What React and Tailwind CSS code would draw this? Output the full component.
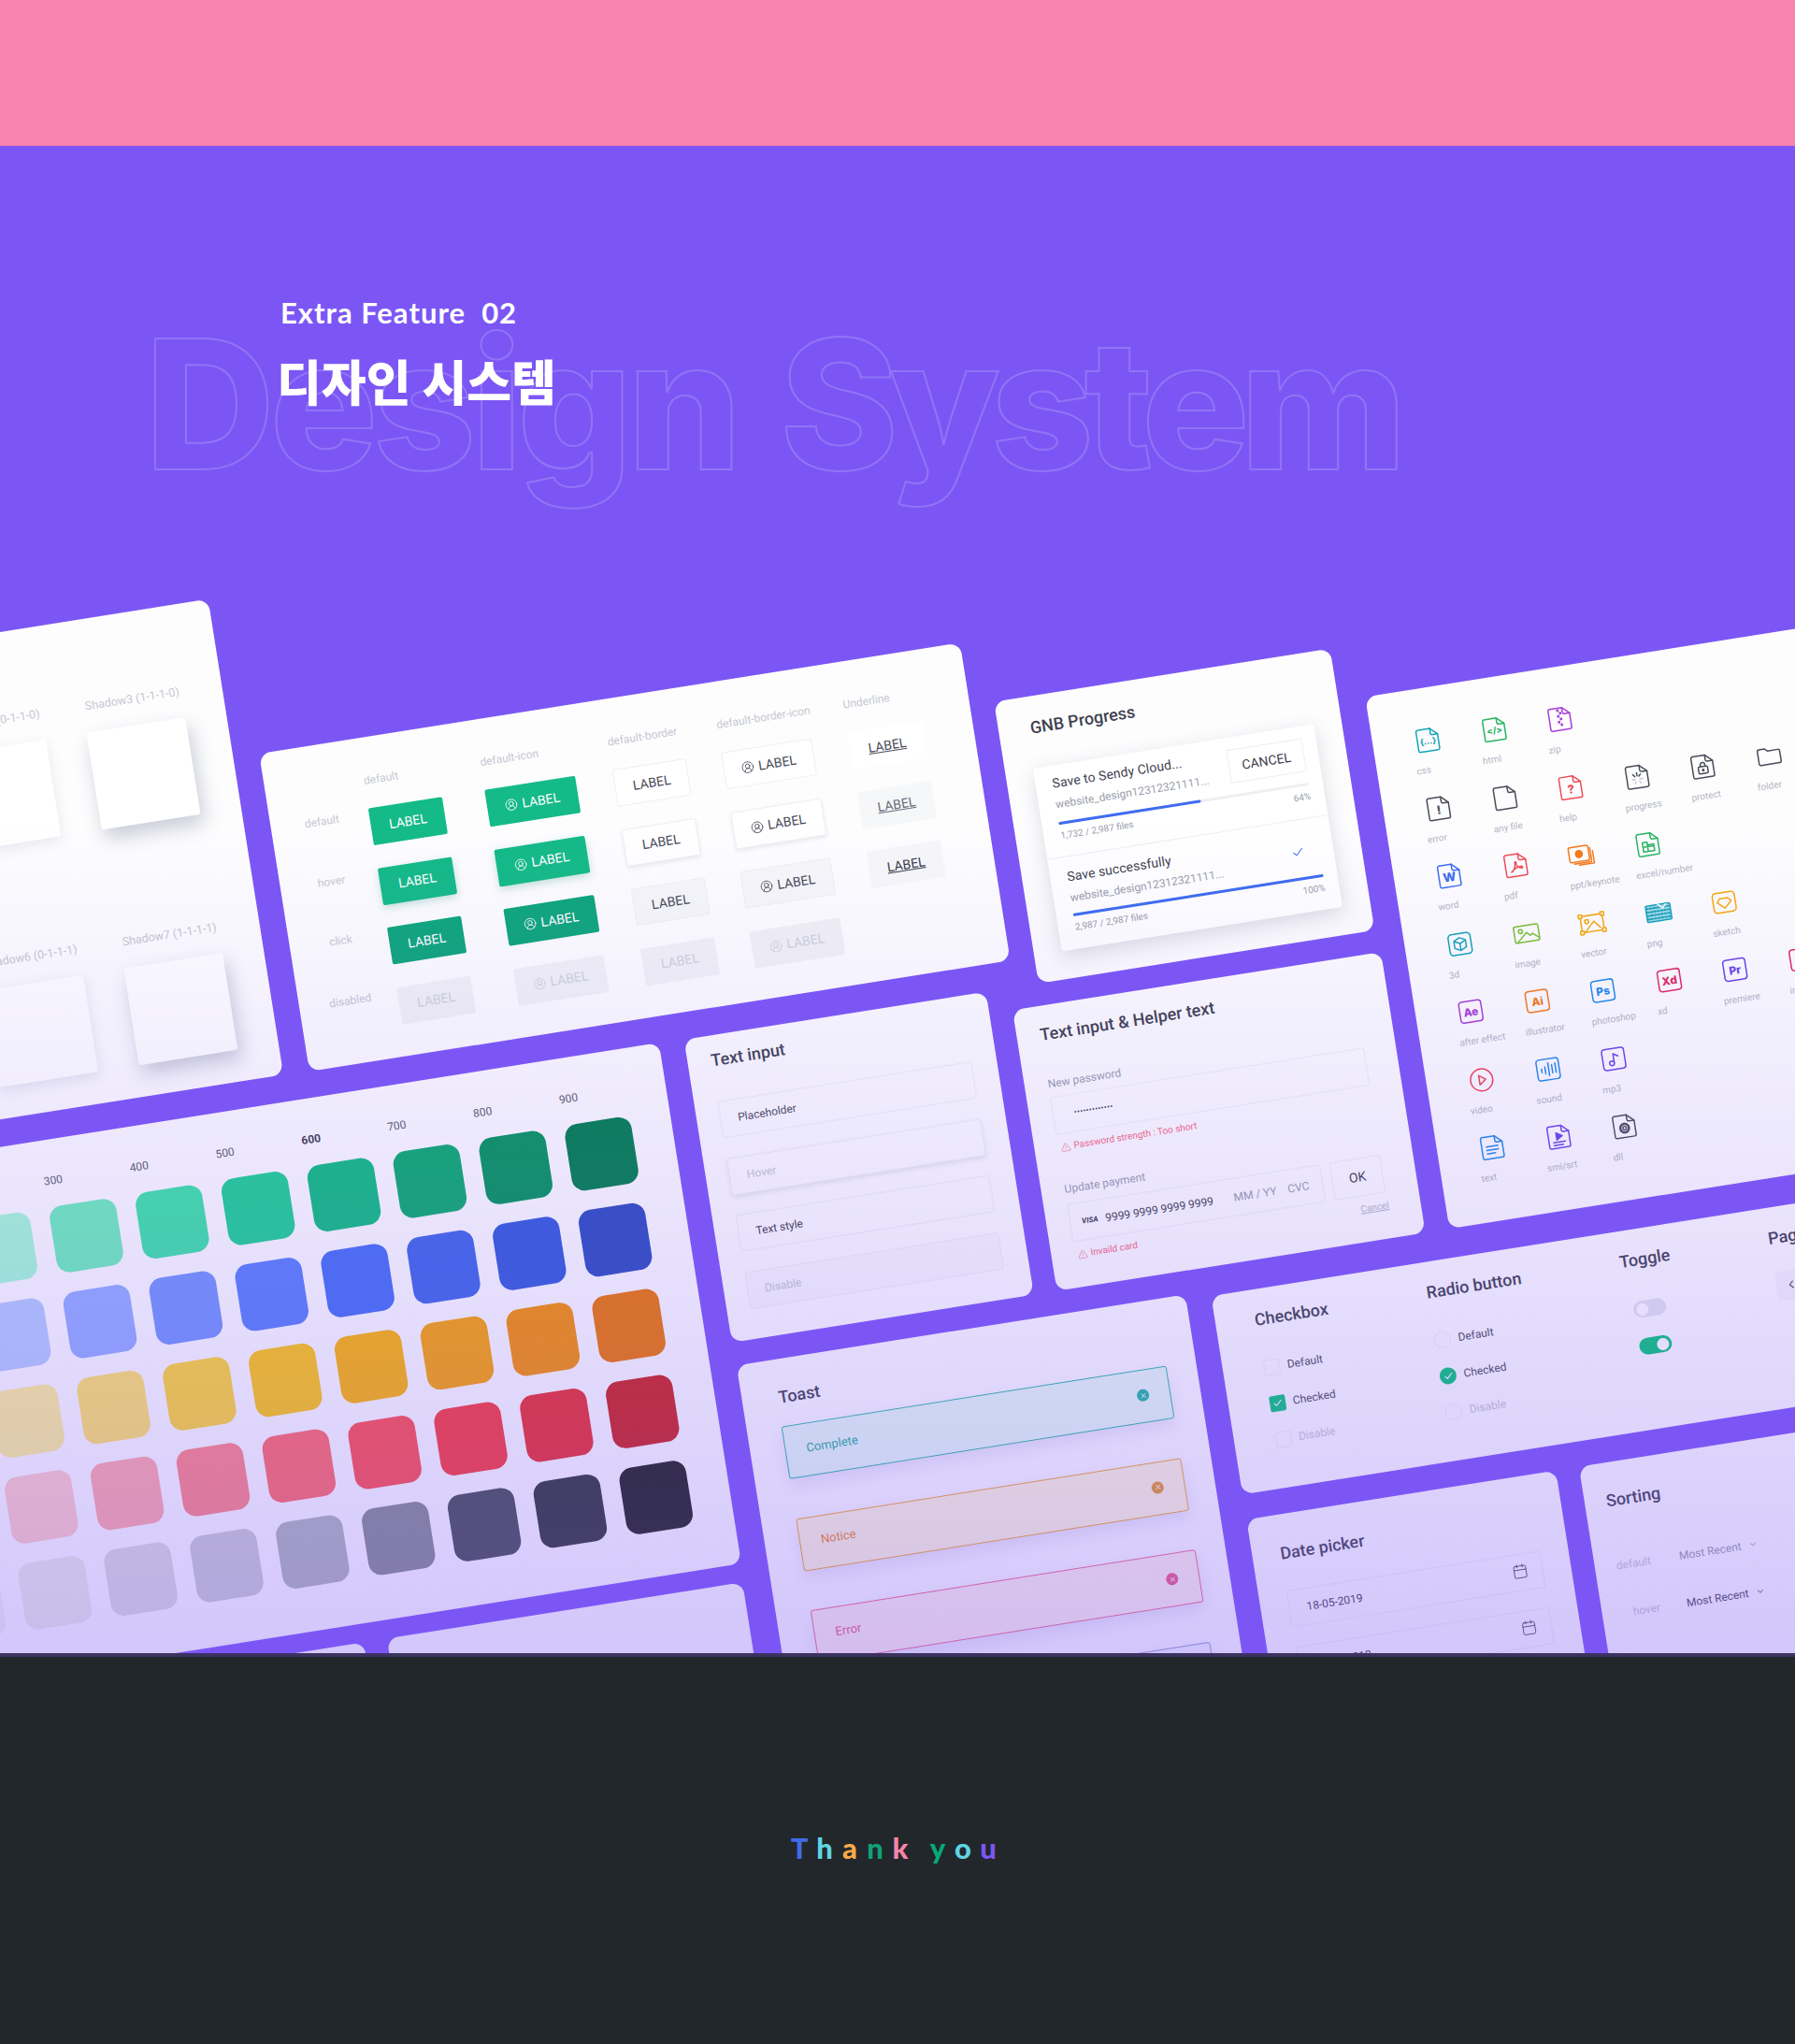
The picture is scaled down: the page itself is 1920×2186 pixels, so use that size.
import React from 'react';
import { CircleUserRound, Check, ChevronDown, ChevronLeft, Calendar, X, TriangleAlert } from 'lucide-react';

const FILE = 'M4.5 2.5H15l6 5.500V20a1.500 1.500 0 0 1-1.500 1.500h-15A1.500 1.500 0 0 1 3 20V4a1.500 1.500 0 0 1 1.500-1.500z';
const FOLD = 'M15 2.500V6.500A1.500 1.500 0 0 0 16.500 8H21';

const FileIcon = ({ color, children }) => (
  <svg width="30" height="30" viewBox="0 0 24 24" fill="none" stroke={color} strokeWidth="1.200" strokeLinejoin="round" strokeLinecap="round">
    <path d={FILE} />
    <path d={FOLD} />
    {children}
  </svg>
);

const BoxIcon = ({ color, label }) => (
  <svg width="30" height="30" viewBox="0 0 24 24" fill="none">
    <rect x="2.500" y="3" width="19" height="18" rx="2.500" stroke={color} strokeWidth="1.200" />
    <text x="12" y="15.800" textAnchor="middle" fontFamily="Inter, sans-serif" fontWeight="800" fontSize="9.500" fill={color}>{label}</text>
  </svg>
);

const Glyph = ({ color, children, size = 8, y = 16 }) => (
  <text x="12" y={y} textAnchor="middle" fontFamily="Inter, sans-serif" fontWeight="800" fontSize={size} fill={color} stroke="none">{children}</text>
);

const RawIcon = ({ color, children }) => (
  <svg width="30" height="30" viewBox="0 0 24 24" fill="none" stroke={color} strokeWidth="1.200" strokeLinejoin="round" strokeLinecap="round">
    {children}
  </svg>
);

const DARK = '#4a4d5a';
const iconRows = [
  [
    { name: 'css', icon: <FileIcon color="#14a3b8"><Glyph color="#14a3b8" size="7" y="15.500">{'{…}'}</Glyph></FileIcon> },
    { name: 'html', icon: <FileIcon color="#27b562"><Glyph color="#27b562" size="7.500" y="15.500">{'</>'}</Glyph></FileIcon> },
    { name: 'zip', icon: <FileIcon color="#a83fd8"><path d="M10 4.500h2M12 7h2M10 9.500h2M12 12h2M10 14.500h2M12 17h2" strokeWidth="2.200" strokeLinecap="butt" /></FileIcon> },
  ],
  [
    { name: 'error', icon: <FileIcon color={DARK}><Glyph color={DARK} size="10" y="17">!</Glyph></FileIcon> },
    { name: 'any file', icon: <FileIcon color={DARK} /> },
    { name: 'help', icon: <FileIcon color="#f04b55"><Glyph color="#f04b55" size="10" y="17">?</Glyph></FileIcon> },
    { name: 'progress', icon: <FileIcon color={DARK}><path d="M12 8.500v2.500M8.500 9.500l1.500 2M15 10l-1.500 1.500" stroke={DARK} /><path d="M7.500 14H10M14 14h2.500M9.500 17.500l1-1.500M14.500 17.500l-1-1.500" stroke="#c9ccd4" /></FileIcon> },
    { name: 'protect', icon: <FileIcon color={DARK}><rect x="8" y="12" width="8" height="6" rx="1" /><path d="M10 12v-1.500a2 2 0 0 1 4 0V12" /><circle cx="12" cy="15" r=".6" fill={DARK} /></FileIcon> },
    { name: 'folder', icon: <RawIcon color={DARK}><path d="M2.500 7A1.500 1.500 0 0 1 4 5.500h5l2 2h9A1.500 1.500 0 0 1 21.500 9v8.500A1.500 1.500 0 0 1 20 19H4a1.500 1.500 0 0 1-1.500-1.500z" /></RawIcon> },
  ],
  [
    { name: 'word', icon: <FileIcon color="#3d6cf0"><Glyph color="#3d6cf0" size="10.500" y="17">W</Glyph></FileIcon> },
    { name: 'pdf', icon: <FileIcon color="#f04b55"><path d="M7.500 17.500c2.500-1 4-4.500 4-7.500 0-1.500 1-1.500 1 0 0 3 2 5 4.500 5 1 0 .5-1.500-1-1.500-3 0-6.500 2-8.500 4z" /></FileIcon> },
    { name: 'ppt/keynote', icon: <RawIcon color="#f57a1a"><rect x="1.500" y="4.500" width="17" height="13" rx="1.500" /><path d="M20 7v11a1 1 0 0 1-1 1H5M22 10v10.500H9" /><circle cx="10" cy="11" r="3.500" fill="#f57a1a" stroke="none" /></RawIcon> },
    { name: 'excel/number', icon: <FileIcon color="#27b562"><path d="M7.500 10h4v8h-4zM11.500 12.500h5.500V18h-5.500zM7.500 14h9.500" /></FileIcon> },
  ],
  [
    { name: '3d', icon: <RawIcon color="#14a3b8"><rect x="2.500" y="3" width="19" height="18" rx="3" /><path d="M12 6.500l5 2.500v6l-5 2.500L7 15V9zM7 9l5 2.500L17 9M12 11.500v6" /></RawIcon> },
    { name: 'image', icon: <RawIcon color="#7ac231"><rect x="1.500" y="5" width="21" height="14" rx="1.500" /><circle cx="7" cy="9.500" r="1.700" /><path d="M3.500 18.500l8.500-7.500 3 3 2-1.500 5 4" /></RawIcon> },
    { name: 'vector', icon: <RawIcon color="#f5a90a"><rect x="2.500" y="5" width="19" height="14" /><rect x="1" y="3.500" width="3" height="3" fill="#fff" /><rect x="20" y="3.500" width="3" height="3" fill="#fff" /><rect x="1" y="17.500" width="3" height="3" fill="#fff" /><rect x="20" y="17.500" width="3" height="3" fill="#fff" /><circle cx="7.500" cy="10" r="1.700" /><path d="M5.500 18.500l8-8 5 6" /></RawIcon> },
    { name: 'png', icon: <RawIcon color="#14a3b8"><rect x="1.500" y="5" width="21" height="14" rx="1" fill="#14a3b8" fillOpacity=".4" /><path d="M2 7.500h20M2 10.500h20M2 13.500h20M2 16.500h20" strokeDasharray="1.500 1.500" strokeWidth="1.500" /><path d="M12 4.500l4 4 3-3" stroke="#fff" /></RawIcon> },
    { name: 'sketch', icon: <RawIcon color="#f5a90a"><rect x="2.500" y="3.500" width="19" height="17" rx="3" /><path d="M8.500 8.500h7l2.500 3-6 5.500-6-5.500z" /></RawIcon> },
  ],
  [
    { name: 'after effect', icon: <BoxIcon color="#a83fd8" label="Ae" /> },
    { name: 'illustrator', icon: <BoxIcon color="#f57a1a" label="Ai" /> },
    { name: 'photoshop', icon: <BoxIcon color="#1f8ae8" label="Ps" /> },
    { name: 'xd', icon: <BoxIcon color="#e0285f" label="Xd" /> },
    { name: 'premiere', icon: <BoxIcon color="#6a45e8" label="Pr" /> },
    { name: 'indesign', icon: <BoxIcon color="#e0285f" label="Id" /> },
  ],
  [
    { name: 'video', icon: <RawIcon color="#ef3f50"><circle cx="12" cy="12" r="9.500" /><path d="M10 8l5.500 4-5.500 4z" /></RawIcon> },
    { name: 'sound', icon: <RawIcon color="#1f8ae8"><rect x="2.500" y="3" width="19" height="18" rx="2.500" /><path d="M6.500 11v3M9.500 9.500v6M12.500 6.500v11M15.500 8.500v7M18.500 7.500v8" /></RawIcon> },
    { name: 'mp3', icon: <RawIcon color="#6a45e8"><rect x="2.500" y="3" width="19" height="18" rx="2.500" /><circle cx="10" cy="15.500" r="2" /><path d="M12 15.500V7.500l4 2.500" /></RawIcon> },
  ],
  [
    { name: 'text', icon: <FileIcon color="#1f8ae8"><path d="M7 11h10M7 14h10M7 17h7" /></FileIcon> },
    { name: 'smi/srt', icon: <FileIcon color="#6a45e8"><path d="M10 8.500l5 3-5 3z" fill="#6a45e8" /><path d="M7 16.500h10M7 19h8" /></FileIcon> },
    { name: 'dll', icon: <FileIcon color={DARK}><circle cx="12" cy="13.500" r="1.500" /><circle cx="12" cy="13.500" r="3.700" strokeWidth="2" strokeDasharray="2 1" /></FileIcon> },
  ],
];

const swatchRows = [
  ['bg-[#c8fbe4]', 'bg-[#a5fbd4]', 'bg-[#6defb8]', 'bg-[#3ce4a4]', 'bg-[#1dd290]', 'bg-[#0fbe7e]', 'bg-[#0aac6b]', 'bg-[#04965b]', 'bg-[#00804d]'],
  ['bg-[#d0dcfd]', 'bg-[#b4ccfb]', 'bg-[#93adfd]', 'bg-[#7394f9]', 'bg-[#5880f8]', 'bg-[#4570f2]', 'bg-[#3e67e5]', 'bg-[#335bd9]', 'bg-[#2d4dbe]'],
  ['bg-[#fff6c4]', 'bg-[#fff196]', 'bg-[#ffe467]', 'bg-[#ffd731]', 'bg-[#ffc80d]', 'bg-[#feb500]', 'bg-[#faa300]', 'bg-[#f79000]', 'bg-[#ec7700]'],
  ['bg-[#ffe0d8]', 'bg-[#ffcec6]', 'bg-[#ffaaa6]', 'bg-[#ff8680]', 'bg-[#ff6b64]', 'bg-[#fe504b]', 'bg-[#f83c38]', 'bg-[#e8302a]', 'bg-[#cb2319]'],
  ['bg-[#f2f4f0]', 'bg-[#eaeee6]', 'bg-[#dbdddc]', 'bg-[#cacdd1]', 'bg-[#afb6b8]', 'bg-[#858c8e]', 'bg-[#454d51]', 'bg-[#2d3534]', 'bg-[#1c2019]'],
];

const shades = ['100', '200', '300', '400', '500', '600', '700', '800', '900'];

const green = 'bg-[#14ba88] text-white';
const buttonColumns = [
  {
    head: 'default', width: 'w-[80px]', left: 'ml-[36px]', icon: false,
    items: [green, `${green} shadow-[0_3px_8px_rgba(20,140,110,.25)]`, 'bg-[#0ea67b] text-white', 'bg-[#f1f2f5] text-[#cfd2d9]'],
  },
  {
    head: 'default-icon', width: 'w-[98px]', left: 'ml-[46px]', icon: true,
    items: [green, `${green} shadow-[0_3px_8px_rgba(20,140,110,.25)]`, 'bg-[#0ea67b] text-white', 'bg-[#f1f2f5] text-[#cfd2d9]'],
  },
  {
    head: 'default-border', width: 'w-[80px]', left: 'ml-[40px]', icon: false,
    items: ['bg-white border border-[#eeeff3] text-[#4a4d5a]', 'bg-white border border-[#eeeff3] text-[#4a4d5a] shadow-[0_2px_4px_rgba(60,60,90,.1)]', 'bg-[#f6f7f9] border border-[#eeeff3] text-[#4a4d5a]', 'bg-[#f1f2f5] text-[#cfd2d9]'],
  },
  {
    head: 'default-border-icon', width: 'w-[98px]', left: 'ml-[38px]', icon: true,
    items: ['bg-white border border-[#eeeff3] text-[#4a4d5a]', 'bg-white border border-[#eeeff3] text-[#4a4d5a] shadow-[0_2px_4px_rgba(60,60,90,.1)]', 'bg-[#f6f7f9] border border-[#eeeff3] text-[#4a4d5a]', 'bg-[#f1f2f5] text-[#cfd2d9]'],
  },
  {
    head: 'Underline', width: 'w-[80px]', left: 'ml-[39px]', icon: false,
    items: ['bg-white text-[#4a4d5a] underline', 'bg-[#f6f7f9] text-[#6b6e7a] underline', 'bg-[#f6f7f9] text-[#3a3d4a] underline'],
  },
];

const Card = ({ className, children }) => (
  <div className={`shrink-0 rounded-[12px] bg-[#fdfdfe] ${className}`}>{children}</div>
);

const Title = ({ children, className = '' }) => (
  <h3 className={`text-[18px] leading-[22px] font-medium text-[#3f4250] ${className}`}>{children}</h3>
);

const ShadowBox = ({ label, className }) => (
  <div className="w-[107px]">
    <div className="h-[14px] text-[12.500px] leading-[14px] text-[#c5c8d1] whitespace-nowrap ml-[3px] mt-[3px]">{label}</div>
    <div className={`h-[105px] mt-[21px] rounded-[3px] bg-white ${className}`} />
  </div>
);

const ShadowCard = () => (
  <Card className="w-[370px] h-[515px] pl-[68px] pt-[83px]">
    <div className="flex gap-[44px]">
      <ShadowBox label="Shadow2 (0-1-1-0)" className="shadow-[0_4px_14px_rgba(70,80,120,.12)]" />
      <ShadowBox label="Shadow3 (1-1-1-0)" className="shadow-[3px_10px_20px_rgba(70,80,120,.28)]" />
    </div>
    <div className="flex gap-[44px] mt-[112px]">
      <ShadowBox label="Shadow6 (0-1-1-1)" className="shadow-[0_4px_14px_rgba(70,80,120,.14)]" />
      <ShadowBox label="Shadow7 (1-1-1-1)" className="shadow-[3px_10px_20px_rgba(70,80,120,.28)]" />
    </div>
  </Card>
);

const ButtonsCard = () => (
  <Card className="w-[759px] h-[344px] flex pt-[39px] pl-[40px]">
    <div className="w-[30px] pt-[36px] flex flex-col gap-[50.500px] text-[12px] leading-[14px] text-[#c5c8d1] items-center">
      <span>default</span>
      <span>hover</span>
      <span>click</span>
      <span>disabled</span>
    </div>
    {buttonColumns.map((col) => (
      <div key={col.head} className={`${col.width} ${col.left} shrink-0`}>
        <div className="h-[14px] text-[12px] leading-[14px] text-[#c5c8d1] whitespace-nowrap">{col.head}</div>
        <div className="mt-[23px] flex flex-col gap-[24.500px]">
          {col.items.map((cls, i) => (
            <div key={i} className={`h-[40px] rounded-[2px] flex items-center justify-center gap-[4px] text-[14px] ${cls}`}>
              {col.icon && <CircleUserRound size={14} strokeWidth={1.4} />}
              LABEL
            </div>
          ))}
        </div>
      </div>
    ))}
  </Card>
);

const ProgressRow = ({ title, pct, files, width, done }) => (
  <div className={`h-[99px] pl-[18px] pr-[15px] ${done ? 'pt-[13px]' : 'pt-[11px]'}`}>
    <div className={`flex justify-between ${done ? 'h-[46px]' : 'h-[48px]'}`}>
      <div>
        <div className="text-[14px] leading-[16px] text-[#3f4250] tracking-[.1px]">{title}</div>
        <div className="mt-[8px] text-[12px] leading-[14px] text-[#9a9eab]">website_design12312321111...</div>
      </div>
      {done ? (
        <Check size={14} strokeWidth={1.8} className="text-[#3f6cf0] mt-[14px] mr-[16px]" />
      ) : (
        <div className="mt-[2px] w-[82px] h-[36px] border border-[#eeeff3] flex items-center justify-center text-[14px] text-[#3f4250]">CANCEL</div>
      )}
    </div>
    <div className="mt-[2px] h-[3px] rounded-full bg-[#eeeff3]">
      <div className="h-[3px] rounded-full bg-[#3f6cf0]" style={{ width }} />
    </div>
    <div className="mt-[6px] flex justify-between text-[10px] leading-[12px] text-[#9a9eab]">
      <span>{files}</span>
      <span>{pct}</span>
    </div>
  </div>
);

const GnbCard = () => (
  <Card className="w-[364px] h-[305px] pl-[30px] pt-[23px]">
    <Title className="pl-[4px]">GNB Progress</Title>
    <div className="mt-[32px] w-[304px] h-[198px] rounded-[3px] bg-white shadow-[0_6px_20px_rgba(60,70,100,.18)] divide-y divide-[#eeeff3]">
      <ProgressRow title="Save to Sendy Cloud..." pct="64%" files="1,732 / 2,987 files" width="57%" />
      <ProgressRow title="Save successfully" pct="100%" files="2,987 / 2,987 files" width="100%" done />
    </div>
  </Card>
);

const IconsCard = () => (
  <Card className="w-[760px] h-[576px] pl-[44px] pt-[41px]">
    {iconRows.map((row, r) => (
      <div key={r} className="flex h-[73.500px]">
        {row.map((item) => (
          <div key={item.name} className="w-[71.500px] shrink-0 flex flex-col items-start">
            <div className="h-[30px]">{item.icon}</div>
            <span className="mt-[11px] -ml-[2px] text-[10px] leading-[12px] text-[#b4b7c3] whitespace-nowrap">{item.name}</span>
          </div>
        ))}
      </div>
    ))}
  </Card>
);

const ColorCard = () => (
  <Card className="w-[922px] h-[564px] pt-[37px] pr-[43px] flex flex-col items-end">
    <div className="flex gap-[21px]">
      {shades.map((s) => (
        <div key={s} className={`w-[72px] text-[12px] leading-[14px] ${s === '600' ? 'font-bold text-[#3f4250]' : 'text-[#5a5d6a]'}`}>{s}</div>
      ))}
    </div>
    <div className="mt-[21px] flex flex-col gap-[21px]">
      {swatchRows.map((row, r) => (
        <div key={r} className="flex gap-[21px]">
          {row.map((cls) => (
            <div key={cls} className={`w-[72px] h-[72px] rounded-[14px] ${cls}`} />
          ))}
        </div>
      ))}
    </div>
  </Card>
);

const FieldBox = ({ className, children }) => (
  <div className={`h-[40px] rounded-[3px] flex items-center pl-[18px] text-[12px] ${className}`}>{children}</div>
);

const TextInputCard = () => (
  <Card className="w-[327px] h-[328px] pl-[25px] pr-[27px] pt-[16px]">
    <Title>Text input</Title>
    <div className="mt-[33px] flex flex-col gap-[21.500px]">
      <FieldBox className="border border-[#eeeff5] text-[#4a4d5a]">Placeholder</FieldBox>
      <FieldBox className="border border-[#eeeff5] text-[#c5c8d1] shadow-[0_2px_5px_rgba(60,60,100,.12)]">Hover</FieldBox>
      <FieldBox className="border border-[#eeeff5] text-[#3f4250]">Text style</FieldBox>
      <FieldBox className="bg-[#f9f9fb] border border-[#eeeff5] text-[#c5c8d1]">Disable</FieldBox>
    </div>
  </Card>
);

const HelperLine = ({ children }) => (
  <div className="flex items-center gap-[3px] text-[10px] leading-[12px] text-[#f8697f]">
    <TriangleAlert size={11} strokeWidth={1.2} />
    <span>{children}</span>
  </div>
);

const HelperCard = () => (
  <Card className="w-[399px] h-[304px] pl-[25px] pr-[34px] pt-[20px]">
    <Title className="text-[17px]">Text input &amp; Helper text</Title>
    <div className="mt-[35px] text-[12px] leading-[14px] text-[#9a9eab]">New password</div>
    <div className="mt-[7px] h-[41px] rounded-[3px] border border-[#eeeff5] flex items-center pl-[22px] text-[#3f4250] text-[9px] tracking-[.2px]">•••••••••••••</div>
    <div className="mt-[8px] pl-[3px]"><HelperLine>Password strength : Too short</HelperLine></div>
    <div className="mt-[32px] text-[12px] leading-[14px] text-[#9a9eab]">Update payment</div>
    <div className="mt-[9px] flex gap-[10px]">
      <div className="w-[274px] h-[41px] rounded-[3px] border border-[#eeeff5] flex items-center pl-[12px] pr-[14px] text-[12px]">
        <span className="text-[8px] font-extrabold italic text-[#3f4250]">VISA</span>
        <span className="ml-[8px] text-[#3f4250]">9999 9999 9999 9999</span>
        <span className="ml-auto text-[#9a9eab]">MM / YY</span>
        <span className="ml-[12px] text-[#9a9eab]">CVC</span>
      </div>
      <div className="w-[55px] h-[41px] rounded-[3px] border border-[#eeeff5] flex items-center justify-center text-[14px] text-[#3f4250]">OK</div>
    </div>
    <div className="mt-[8px] pl-[3px] flex justify-between items-start">
      <HelperLine>Invaild card</HelperLine>
      <span className="text-[10px] leading-[12px] text-[#b4b7c3] underline">Cancel</span>
    </div>
  </Card>
);

const Toast = ({ label, className, dot }) => (
  <div className={`h-[57px] rounded-[3px] border flex items-center justify-between pl-[22px] pr-[22px] text-[13px] shadow-[0_8px_16px_rgba(90,70,170,.12)] ${className}`}>
    <span className="mb-[4px]">{label}</span>
    <span className={`w-[13px] h-[13px] mb-[2px] rounded-full flex items-center justify-center text-white ${dot}`}>
      <X size={8} strokeWidth={2.5} />
    </span>
  </div>
);

const ToastCard = () => (
  <Card className="w-[486px] h-[500px] pl-[37px] pr-[32px] pt-[30px]">
    <Title className="pl-[2px]">Toast</Title>
    <div className="mt-[20px] flex flex-col gap-[42.500px]">
      <Toast label="Complete" className="bg-[#e6fbf2] border-[#2fb8a5] text-[#1fb09a]" dot="bg-[#21b89c]" />
      <Toast label="Notice" className="bg-[#fff6dc] border-[#f0a830] text-[#f08a24]" dot="bg-[#e8982a]" />
      <Toast label="Error" className="bg-[#fff0ea] border-[#ef6a8c] text-[#ec5a85]" dot="bg-[#ec5a85]" />
      <Toast label="Info" className="bg-[#f4f6ff] border-[#8f9dc8] text-[#6a78a8]" dot="bg-[#6a78a8]" />
    </div>
  </Card>
);

const Row = ({ control, label, muted }) => (
  <div className="h-[18px] flex items-center gap-[8px]">
    {control}
    <span className={`text-[12px] ${muted ? 'text-[#c5c8d1]' : 'text-[#4a4d5a]'}`}>{label}</span>
  </div>
);

const CheckCard = () => (
  <Card className="w-[1000px] h-[215px] pt-[22px] pl-[42px] flex">
    <div className="w-[186px]">
      <Title>Checkbox</Title>
      <div className="mt-[32px] pl-[2px] flex flex-col gap-[21px]">
        <Row label="Default" control={<span className="w-[17px] h-[17px] rounded-[2px] border border-[#eeeff5]" />} />
        <Row label="Checked" control={<span className="w-[17px] h-[17px] rounded-[2px] bg-[#08c678] text-white flex items-center justify-center"><Check size={11} strokeWidth={2.5} /></span>} />
        <Row label="Disable" muted control={<span className="w-[17px] h-[17px] rounded-[2px] border border-[#eeeff5]" />} />
      </div>
    </div>
    <div className="w-[212px]">
      <Title>Radio button</Title>
      <div className="mt-[32px] flex flex-col gap-[21px]">
        <Row label="Default" control={<span className="w-[18px] h-[18px] rounded-full border border-[#eeeff5]" />} />
        <Row label="Checked" control={<span className="w-[18px] h-[18px] rounded-full bg-[#08c678] text-white flex items-center justify-center"><Check size={11} strokeWidth={2.5} /></span>} />
        <Row label="Disable" muted control={<span className="w-[18px] h-[18px] rounded-full border border-[#eeeff5]" />} />
      </div>
    </div>
    <div className="w-[161px] -ml-[3px]">
      <Title>Toggle</Title>
      <div className="mt-[33px] pl-[7px] flex flex-col gap-[22px]">
        <div className="w-[35px] h-[18px] rounded-full bg-[#e4e4ee] flex items-center pl-[3px]"><span className="w-[13px] h-[13px] rounded-full bg-white" /></div>
        <div className="w-[35px] h-[18px] rounded-full bg-[#08c678] flex items-center justify-end pr-[3px]"><span className="w-[13px] h-[13px] rounded-full bg-white" /></div>
      </div>
    </div>
    <div>
      <Title>Pagination</Title>
      <div className="mt-[25px] ml-[1px] w-[32px] h-[32px] rounded-[3px] bg-[#f7f6fd] flex items-center justify-center text-[#4a4d5a]"><ChevronLeft size={14} /></div>
    </div>
  </Card>
);

const DateField = () => (
  <div className="h-[40px] rounded-[3px] border border-[#eeeff5] flex items-center justify-between pl-[18px] pr-[15px] text-[12px] text-[#3f4250]">
    <span>18-05-2019</span>
    <Calendar size={17} strokeWidth={1.2} className="-mt-[3px]" />
  </div>
);

const DateCard = () => (
  <Card className="w-[335px] h-[300px] pl-[30px] pr-[30px] pt-[31px]">
    <Title>Date picker</Title>
    <div className="mt-[29px] flex flex-col gap-[21px]">
      <DateField />
      <DateField />
    </div>
  </Card>
);

const SortCard = () => (
  <Card className="w-[600px] h-[300px] pl-[23px] pt-[30px]">
    <Title>Sorting</Title>
    <div className="mt-[51px] flex items-center text-[12px] h-[16px]">
      <span className="w-[68px] text-[#c5c8d1]">default</span>
      <span className="text-[#9a9eab]">Most Recent</span>
      <ChevronDown size={10} className="ml-[8px] text-[#9a9eab]" />
    </div>
    <div className="mt-[35px] flex items-center text-[12px] h-[16px]">
      <span className="w-[68px] pl-[10px] text-[#c5c8d1]">hover</span>
      <span className="text-[#4a4d5a]">Most Recent</span>
      <ChevronDown size={10} className="ml-[8px] text-[#4a4d5a]" />
    </div>
  </Card>
);

const Collage = () => (
  <div className="absolute left-[-291px] top-[566px] origin-top-left rotate-[-9deg] grid grid-cols-[935px_775px_800px] grid-rows-[530px_357px_500px]">
    <div className="col-span-2 flex items-start pl-[150px]">
      <ShadowCard />
      <div className="ml-[28px] mt-[172px]"><ButtonsCard /></div>
      <div className="ml-[26px] mt-[240px]"><GnbCard /></div>
    </div>
    <div className="row-span-2 pl-[16px] pt-[297px]">
      <IconsCard />
    </div>
    <div className="row-span-2 pt-[14px]">
      <ColorCard />
      <div className="mt-[20px] flex gap-[25px]">
        <Card className="w-[510px] h-[200px]" />
        <Card className="w-[385px] h-[200px]" />
      </div>
    </div>
    <div className="flex items-start pl-[14px]">
      <div className="mt-[15px]"><TextInputCard /></div>
      <div className="ml-[25px] mt-[39px]"><HelperCard /></div>
    </div>
    <div className="col-span-2 flex items-start pl-[15px]">
      <div className="mt-[11px]"><ToastCard /></div>
      <div className="ml-[27px] mt-[17px]">
        <CheckCard />
        <div className="mt-[27px] flex gap-[25px]">
          <DateCard />
          <SortCard />
        </div>
      </div>
    </div>
  </div>
);

const thanks = [
  ['T', 'w-[27px] text-[#4169e8]'], ['h', 'w-[27px] text-[#5fd5e5]'], ['a', 'w-[27px] text-[#f9a94a]'], ['n', 'w-[27px] text-[#0ea37a]'], ['k', 'w-[27px] text-[#f983ab]'],
  [' ', 'w-[13px]'], ['y', 'w-[27px] text-[#04aa7a]'], ['o', 'w-[27px] text-[#5fd5e5]'], ['u', 'w-[27px] text-[#7c56f5]'],
];

export default function App() {
  return (
    <div className="w-[1920px] h-[2186px] overflow-hidden [font-family:Roboto,sans-serif]">
      <div className="h-[156px] bg-[#f983ac]" />

      <section className="relative h-[1612px] overflow-hidden bg-[#7c56f5]">
        <div className="absolute left-[155px] top-[156px] flex gap-[46px] text-[192px] leading-[240px] font-extrabold whitespace-nowrap text-transparent [font-family:Inter,sans-serif] [-webkit-text-stroke:2px_#9075f6]">
          <span className="tracking-[-5px]">Design</span>
          <span className="tracking-[-10px]">System</span>
        </div>
        <div className="relative pl-[300px] pt-[158px] text-white">
          <p className="text-[31px] leading-[40px] font-bold tracking-[1px] [font-family:Lato,sans-serif]">Extra Feature&nbsp;&nbsp;02</p>
          <h2 className="mt-[21px] -ml-[4px] text-[52px] leading-[64px] font-black [font-family:'Noto_Sans_CJK_KR',sans-serif]">디자인 시스템</h2>
        </div>
        <Collage />
        <div className="absolute inset-0 pointer-events-none bg-[linear-gradient(180deg,rgba(124,86,245,0)_45%,rgba(124,86,245,.33)_100%)]" />
      </section>

      <div className="h-[4px] bg-[#3b3260]" />

      <footer className="h-[414px] bg-[#22272b] flex justify-center pt-[184px] pr-[8px]">
        <div className="flex h-[40px] items-center text-[31px] font-black [font-family:Lato,sans-serif]">
          {thanks.map(([ch, cls], i) => (
            <span key={i} className={`text-center ${cls}`}>{ch}</span>
          ))}
        </div>
      </footer>
    </div>
  );
}
